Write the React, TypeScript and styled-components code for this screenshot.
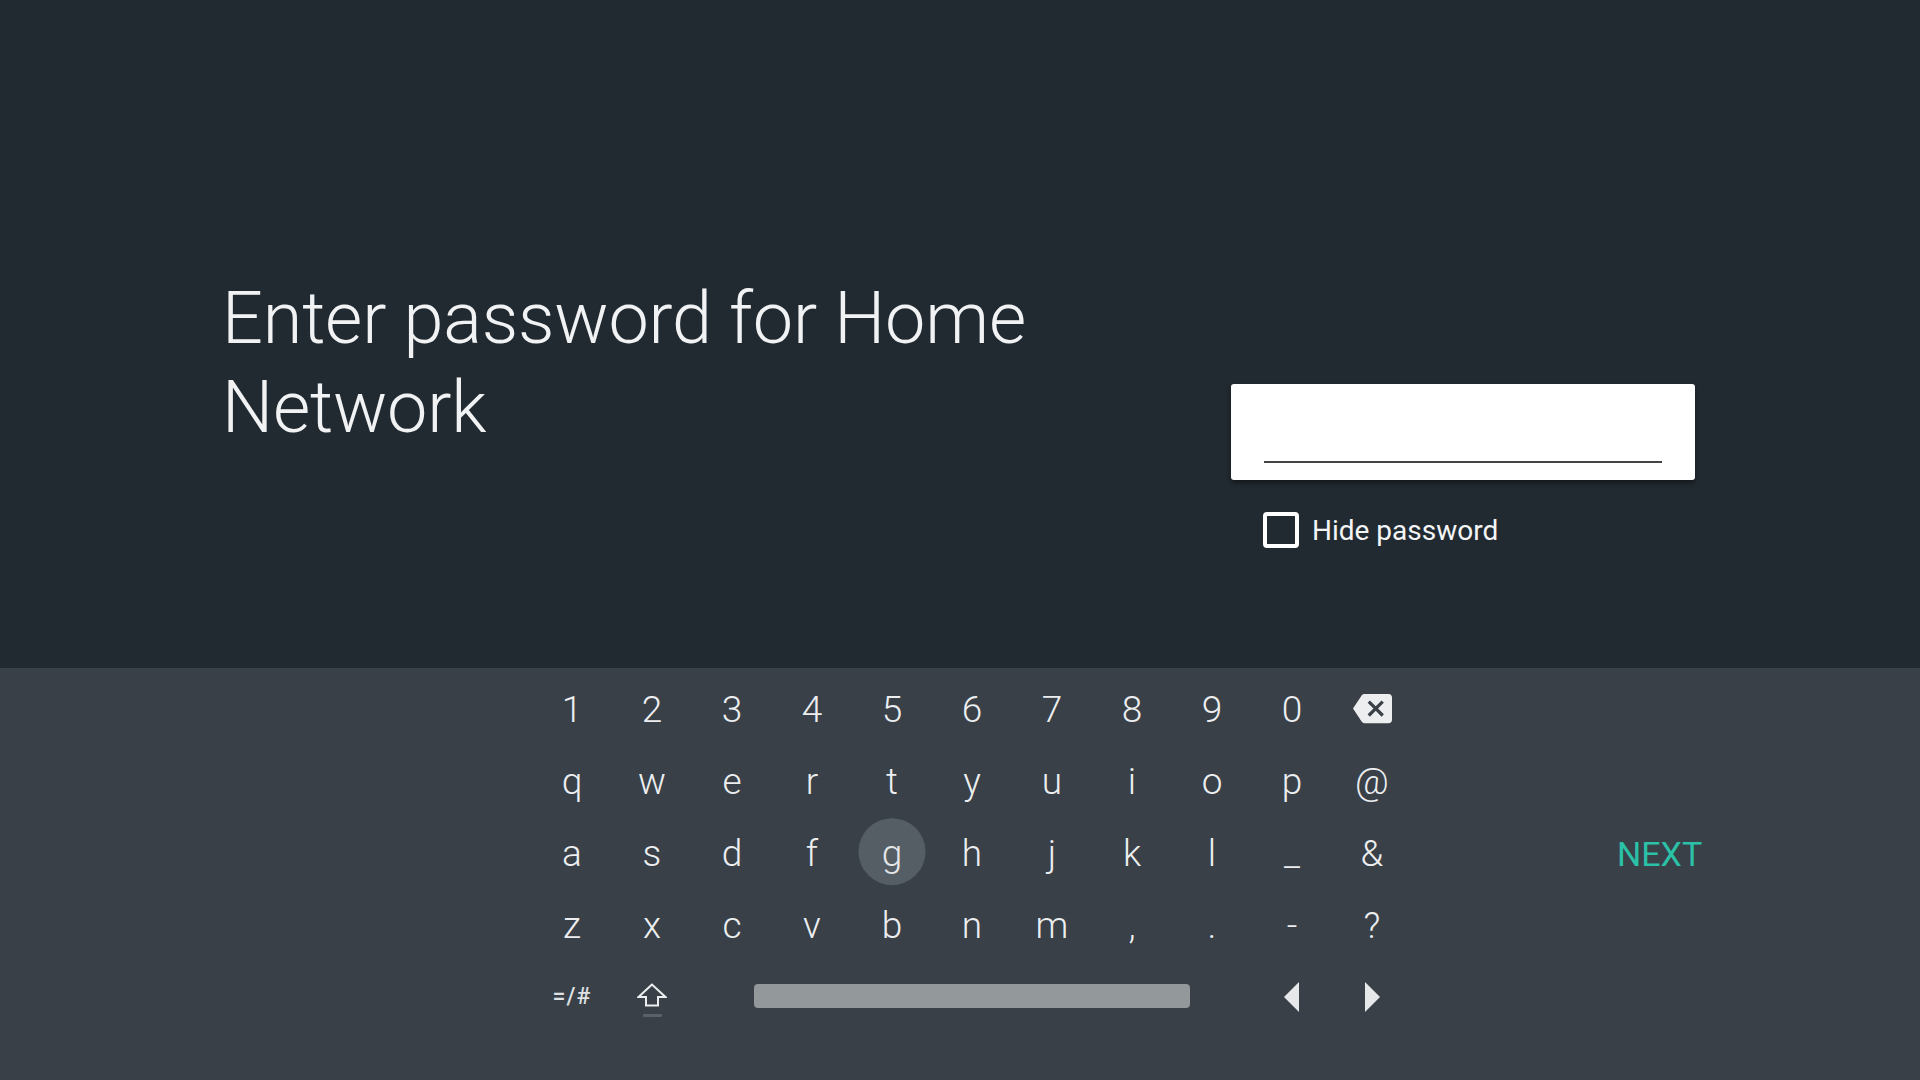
import React from "react";
import styled, { createGlobalStyle } from "styled-components";

const GlobalStyle = createGlobalStyle`
  html, body {
    margin: 0;
    padding: 0;
    background: #222a31;
    font-family: Roboto, "Noto Sans", "Liberation Sans", sans-serif;
  }
  * { box-sizing: border-box; }
`;

const Screen = styled.div`
  width: 1920px;
  height: 1080px;
  display: flex;
  flex-direction: column;
  overflow: hidden;
`;

const Upper = styled.section`
  height: 668px;
  background: #222a31;
  display: flex;
  flex-direction: row;
`;

const TitleColumn = styled.div`
  width: 1031px;
  padding: 274px 0 0 222px;
`;

const Title = styled.h1`
  margin: 0;
  font-family: Roboto, "Liberation Sans", sans-serif;
  font-weight: 300;
  font-size: 72px;
  line-height: 89px;
  color: #f1f2f3;
  letter-spacing: -0.2px;
  white-space: nowrap;
`;

const FieldColumn = styled.div`
  width: 464px;
  margin-left: 200px;
  padding-top: 384px;
  display: flex;
  flex-direction: column;
`;

const InputCard = styled.div`
  height: 96px;
  background: #ffffff;
  border-radius: 3px;
  box-shadow: 0 3px 5px rgba(0, 0, 0, 0.45);
  padding: 0 33px 0 33px;
  display: flex;
  align-items: flex-end;
`;

const Underline = styled.div`
  width: 100%;
  height: 2px;
  background: #454545;
  margin-bottom: 17px;
`;

const CheckRow = styled.label`
  display: flex;
  align-items: center;
  gap: 13px;
  margin-top: 32px;
  padding-left: 32px;
`;

const CheckBox = styled.span`
  width: 36px;
  height: 36px;
  border: 4px solid #ffffff;
  border-radius: 4px;
  flex-shrink: 0;
`;

const CheckLabel = styled.span`
  font-family: Roboto, "Liberation Sans", sans-serif;
  font-weight: 400;
  font-size: 28px;
  color: #f4f5f6;
  margin-top: 1px;
`;

const Keyboard = styled.section`
  flex: 1;
  background: #394048;
  display: flex;
  flex-direction: row;
  padding: 5px 0 0 532px;
`;

const KeyGrid = styled.div`
  display: grid;
  grid-template-columns: repeat(11, 80px);
  grid-auto-rows: 72px;
`;

const Key = styled.div<{ $span?: number; $focused?: boolean }>`
  grid-column: span ${(p) => p.$span ?? 1};
  display: flex;
  align-items: center;
  justify-content: center;
  position: relative;
  font-family: Roboto, "Liberation Sans", sans-serif;
  font-weight: 300;
  font-size: 37px;
  color: ${(p) => (p.$focused ? "#e4e6e8" : "#eceef0")};
  &::before {
    content: "";
    display: ${(p) => (p.$focused ? "block" : "none")};
    position: absolute;
    width: 67px;
    height: 67px;
    border-radius: 50%;
    background: #565e65;
    left: 50%;
    top: 50%;
    transform: translate(-50%, -52%);
  }
`;

const KeyText = styled.span`
  position: relative;
`;

const BottomKey = styled(Key)`
  margin-top: -7px;
`;

const SymbolKey = styled.span`
  font-family: Roboto, "Liberation Sans", sans-serif;
  font-weight: 500;
  font-size: 23px;
  color: #dfe1e3;
  margin-top: 5px;
  letter-spacing: 1px;
`;

const ShiftWrap = styled.div`
  display: flex;
  flex-direction: column;
  align-items: center;
  gap: 7px;
  margin-top: 12px;
`;

const ShiftBar = styled.div`
  width: 19px;
  height: 3px;
  background: #596169;
  border-radius: 1px;
`;

const SpaceBar = styled.div`
  width: 436px;
  height: 24px;
  border-radius: 4px;
  background: #93989b;
  margin-top: 4px;
`;

const Actions = styled.div`
  margin-left: 205px;
  padding-top: 144px;
`;

const NextButton = styled.div`
  height: 72px;
  display: flex;
  align-items: center;
  font-family: Roboto, "Liberation Sans", sans-serif;
  font-weight: 400;
  font-size: 34px;
  color: #2ac1a7;
  margin-top: 1px;
`;

const BackspaceIcon = () => (
  <svg width="39" height="39" viewBox="0 0 24 24" style={{ marginTop: -1 }}>
    <path
      fill="#eceef0"
      fillRule="evenodd"
      d="M22 3H7c-.69 0-1.23.35-1.59.88L0 12l5.41 8.11c.36.53.9.89 1.59.89h15c1.1 0 2-.9 2-2V5c0-1.1-.9-2-2-2zm-3 12.59L17.59 17 14 13.41 10.41 17 9 15.59 12.59 12 9 8.41 10.41 7 14 10.59 17.59 7 19 8.41 15.41 12 19 15.59z"
    />
  </svg>
);

const ShiftIcon = () => (
  <svg width="30" height="24" viewBox="0 0 30 24">
    <path
      d="M15 1.5 L1.5 14 H9 V22.5 H21 V14 H28.5 Z"
      fill="none"
      stroke="#eceef0"
      strokeWidth="2"
      strokeLinejoin="miter"
    />
  </svg>
);

const ArrowIcon = ({ dir }: { dir: "left" | "right" }) => (
  <svg width="16" height="30" viewBox="0 0 16 30" style={{ marginTop: 6 }}>
    {dir === "left" ? (
      <path d="M15 0 V30 L0 15 Z" fill="#e6e8ea" />
    ) : (
      <path d="M1 0 V30 L16 15 Z" fill="#e6e8ea" />
    )}
  </svg>
);

const rows = [
  ["1", "2", "3", "4", "5", "6", "7", "8", "9", "0"],
  ["q", "w", "e", "r", "t", "y", "u", "i", "o", "p", "@"],
  ["a", "s", "d", "f", "g", "h", "j", "k", "l", "_", "&"],
  ["z", "x", "c", "v", "b", "n", "m", ",", ".", "-", "?"],
];

export default function App() {
  return (
    <>
      <GlobalStyle />
      <Screen>
        <Upper>
          <TitleColumn>
            <Title>
              Enter password for Home
              <br />
              Network
            </Title>
          </TitleColumn>
          <FieldColumn>
            <InputCard>
              <Underline />
            </InputCard>
            <CheckRow>
              <CheckBox />
              <CheckLabel>Hide password</CheckLabel>
            </CheckRow>
          </FieldColumn>
        </Upper>
        <Keyboard>
          <KeyGrid>
            {rows.map((row, ri) => (
              <React.Fragment key={ri}>
                {row.map((k) => (
                  <Key key={k} $focused={k === "g"}>
                    <KeyText>{k}</KeyText>
                  </Key>
                ))}
                {ri === 0 && (
                  <Key>
                    <BackspaceIcon />
                  </Key>
                )}
              </React.Fragment>
            ))}
            <BottomKey>
              <SymbolKey>=/#</SymbolKey>
            </BottomKey>
            <BottomKey>
              <ShiftWrap>
                <ShiftIcon />
                <ShiftBar />
              </ShiftWrap>
            </BottomKey>
            <BottomKey $span={7}>
              <SpaceBar />
            </BottomKey>
            <BottomKey>
              <ArrowIcon dir="left" />
            </BottomKey>
            <BottomKey>
              <ArrowIcon dir="right" />
            </BottomKey>
          </KeyGrid>
          <Actions>
            <NextButton>NEXT</NextButton>
          </Actions>
        </Keyboard>
      </Screen>
    </>
  );
}
